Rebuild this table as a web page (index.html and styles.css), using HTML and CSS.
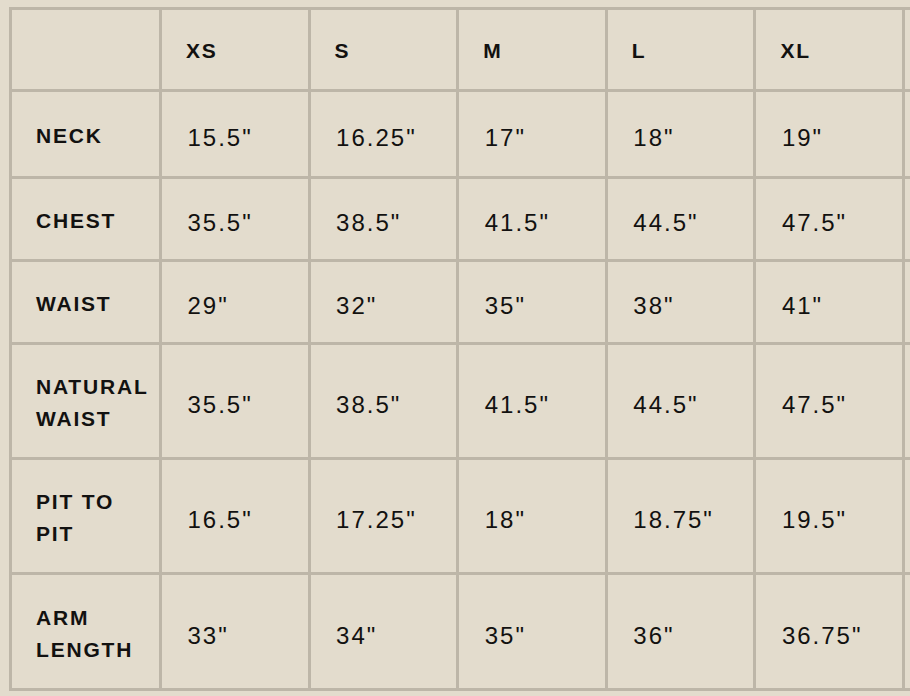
FILE: index.html
```html
<!DOCTYPE html>
<html lang="en">
<head>
<meta charset="utf-8">
<title>Size Chart</title>
<link rel="stylesheet" href="styles.css">
</head>
<body>
<div class="chart-wrap">
<div class="chart" role="table" aria-label="Size chart">
  <div class="cell head" role="columnheader"></div>
  <div class="cell head" role="columnheader">XS</div>
  <div class="cell head" role="columnheader">S</div>
  <div class="cell head" role="columnheader">M</div>
  <div class="cell head" role="columnheader">L</div>
  <div class="cell head" role="columnheader">XL</div>
  <div class="cell head" role="columnheader"></div>

  <div class="cell label" role="rowheader">NECK</div>
  <div class="cell val">15.5"</div>
  <div class="cell val">16.25"</div>
  <div class="cell val">17"</div>
  <div class="cell val">18"</div>
  <div class="cell val">19"</div>
  <div class="cell val"></div>

  <div class="cell label" role="rowheader">CHEST</div>
  <div class="cell val">35.5"</div>
  <div class="cell val">38.5"</div>
  <div class="cell val">41.5"</div>
  <div class="cell val">44.5"</div>
  <div class="cell val">47.5"</div>
  <div class="cell val"></div>

  <div class="cell label" role="rowheader">WAIST</div>
  <div class="cell val">29"</div>
  <div class="cell val">32"</div>
  <div class="cell val">35"</div>
  <div class="cell val">38"</div>
  <div class="cell val">41"</div>
  <div class="cell val"></div>

  <div class="cell label" role="rowheader">NATURAL WAIST</div>
  <div class="cell val">35.5"</div>
  <div class="cell val">38.5"</div>
  <div class="cell val">41.5"</div>
  <div class="cell val">44.5"</div>
  <div class="cell val">47.5"</div>
  <div class="cell val"></div>

  <div class="cell label" role="rowheader">PIT TO PIT</div>
  <div class="cell val">16.5"</div>
  <div class="cell val">17.25"</div>
  <div class="cell val">18"</div>
  <div class="cell val">18.75"</div>
  <div class="cell val">19.5"</div>
  <div class="cell val"></div>

  <div class="cell label" role="rowheader">ARM LENGTH</div>
  <div class="cell val">33"</div>
  <div class="cell val">34"</div>
  <div class="cell val">35"</div>
  <div class="cell val">36"</div>
  <div class="cell val">36.75"</div>
  <div class="cell val"></div>
</div>
</div>
</body>
</html>
```

FILE: styles.css
```css
html, body {
  background: #e3dccd;
}

body {
  margin: 0;
  padding: 7px 0 0 9px;
  font-family: "Liberation Sans", Arial, sans-serif;
  color: #121110;
}

.chart-wrap {
  width: 901px;
  overflow: hidden;
}

.chart {
  display: grid;
  grid-template-columns: 147px repeat(6, 145.6px);
  grid-template-rows: 79px 84px 80px 80px 112px 112px 113px;
  gap: 3px;
  padding: 3px;
  background: #bdb6a8;
  width: max-content;
}

.cell {
  background: #e3dccd;
  display: flex;
  align-items: center;
  padding: 2px 6px 0 24px;
  box-sizing: border-box;
}

.head,
.label {
  font-weight: 700;
  font-size: 21px;
  letter-spacing: 1.8px;
  line-height: 32px;
}

.label {
  padding-top: 4px;
}

.val {
  font-size: 24px;
  letter-spacing: 2px;
  line-height: 32px;
  padding-top: 8px;
  padding-left: 25.5px;
}
```
